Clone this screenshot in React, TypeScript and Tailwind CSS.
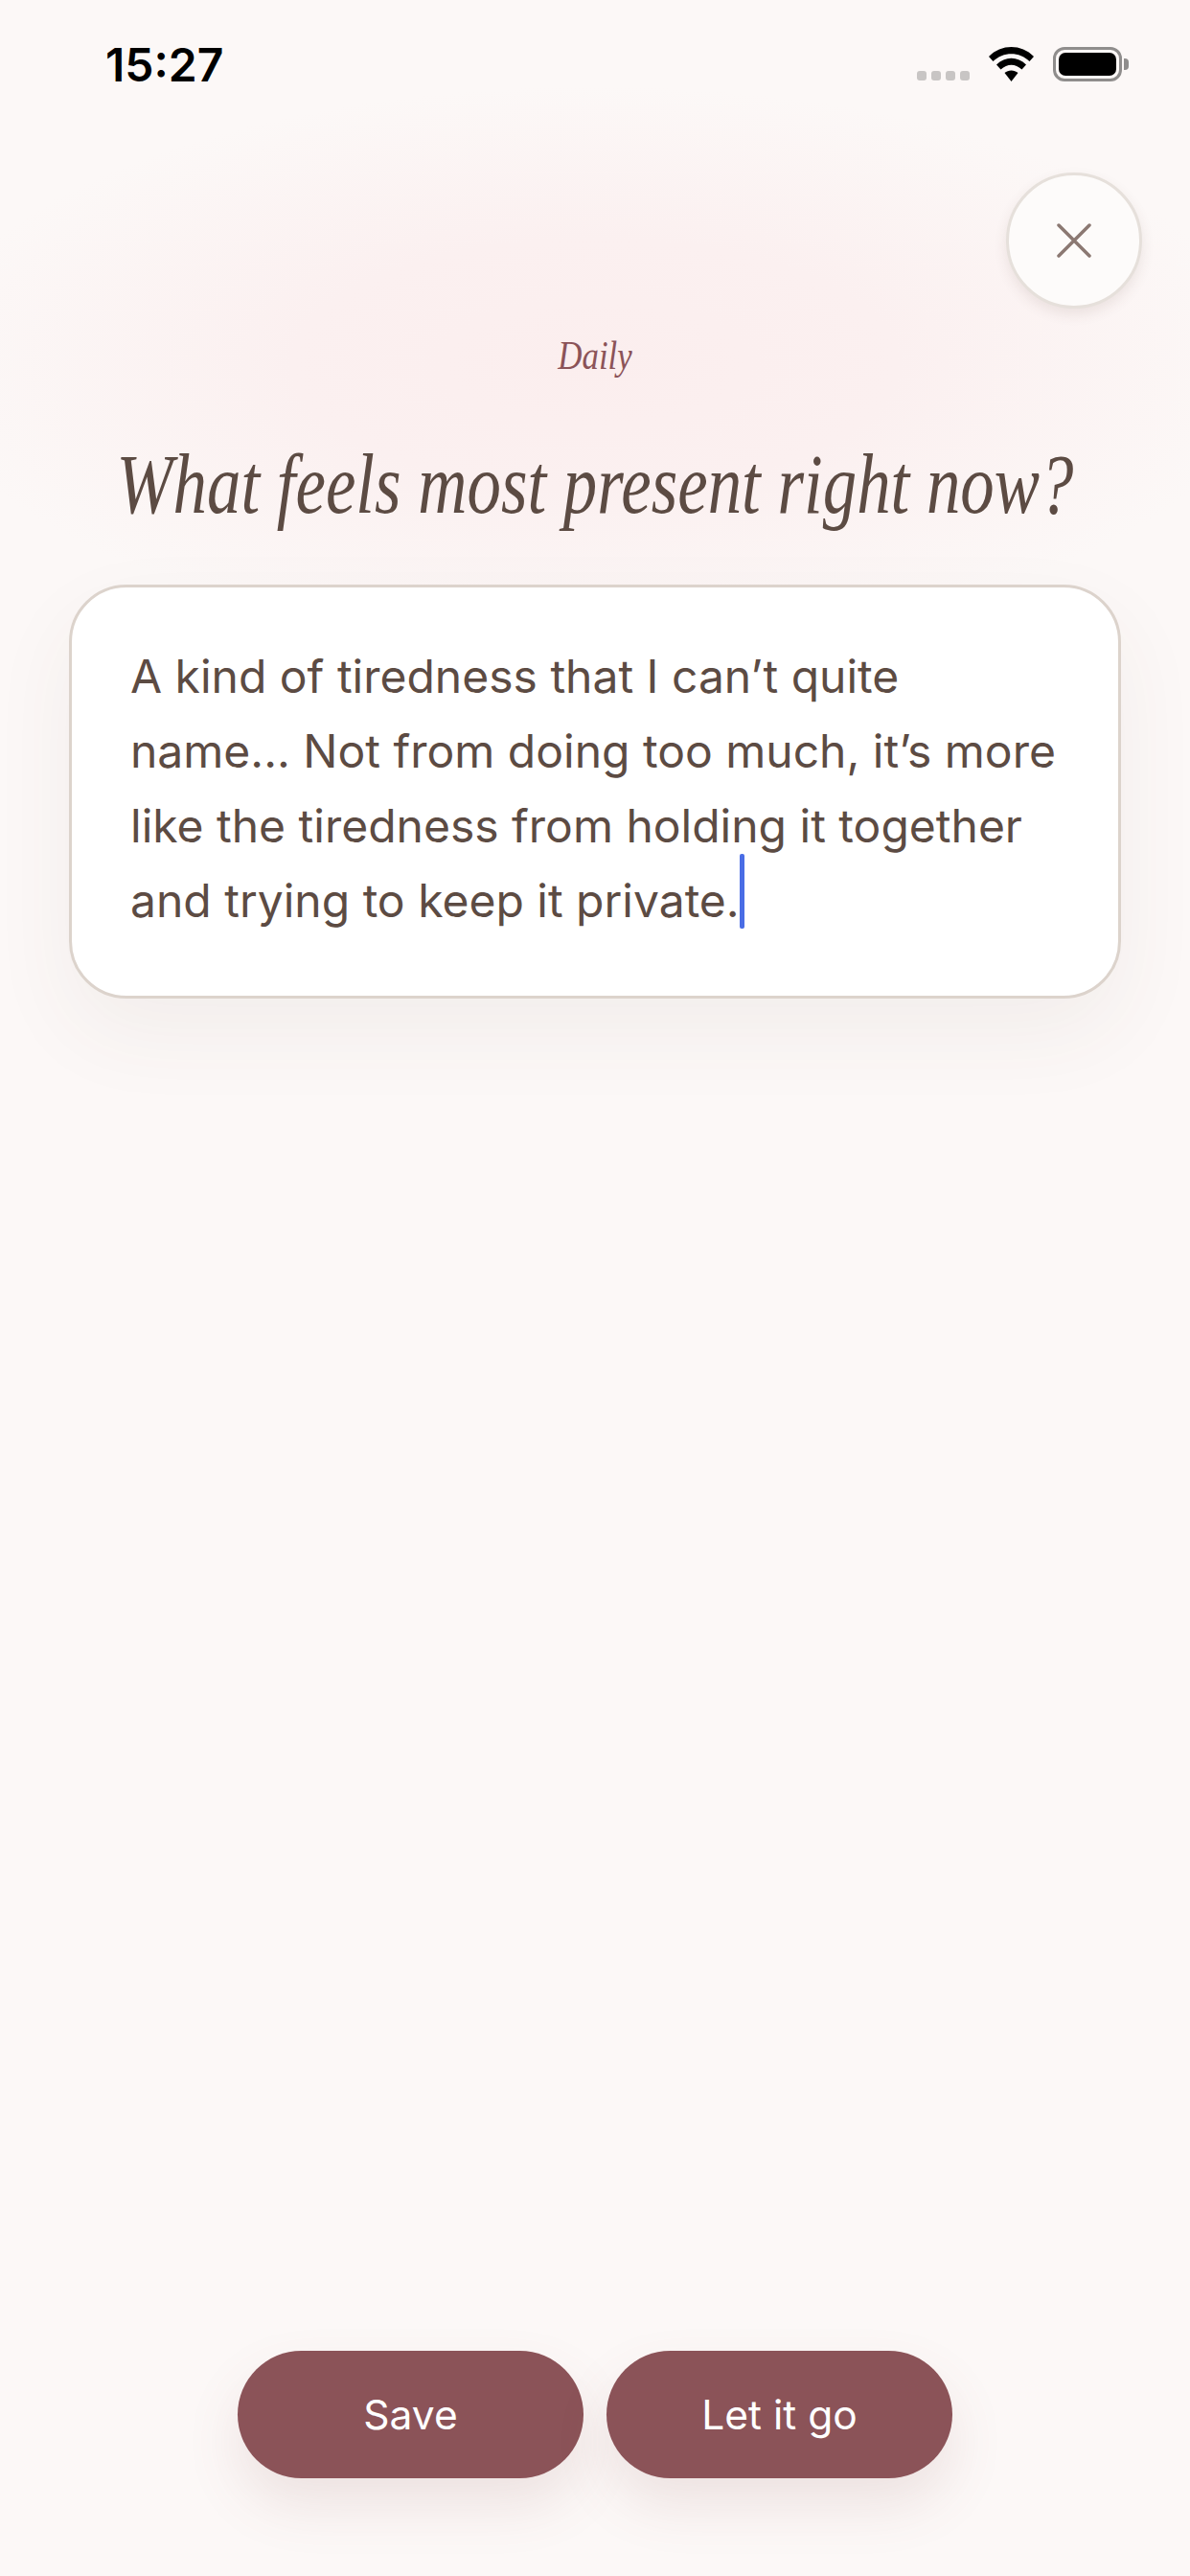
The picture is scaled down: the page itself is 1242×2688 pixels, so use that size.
function Wifi() {
  return (
    <svg width="47" height="36" viewBox="0 0 47 36" fill="#000">
      <path d="M0 10C13-3.3 34-3.3 47 10L42.5 15C32 4.5 15 4.5 4.5 15Z" />
      <path d="M8 18.5C17 9.5 30 9.5 39 18.5L34.5 23.5C27.5 17 19.5 17 12.5 23.5Z" />
      <path d="M16.5 27C20.5 23.5 26.5 23.5 30.5 27L23.5 36Z" />
    </svg>
  );
}

function StatusBar() {
  return (
    <div className="flex items-start justify-between pl-[110px] pr-[64px] pt-[40px] h-[180px]">
      <span className="font-['Inter'] text-[48px] leading-[56px] font-semibold text-black">
        15:27
      </span>
      <div className="flex items-end gap-[20px] mt-[9px]">
        <div className="flex gap-[5px] mb-[1px]">
          <div className="w-[10px] h-[10px] rounded-[3px] bg-[#c8c5c4]" />
          <div className="w-[10px] h-[10px] rounded-[3px] bg-[#c8c5c4]" />
          <div className="w-[10px] h-[10px] rounded-[3px] bg-[#c8c5c4]" />
          <div className="w-[10px] h-[10px] rounded-[3px] bg-[#c8c5c4]" />
        </div>
        <Wifi />
        <div className="flex items-center gap-[2px]">
          <div className="w-[72px] h-[36px] rounded-[12px] border-[3px] border-[#8f8d8c] p-[3px]">
            <div className="w-full h-full rounded-[7px] bg-black" />
          </div>
          <div className="w-[5px] h-[12px] rounded-r-[4px] bg-[#8f8d8c]" />
        </div>
      </div>
    </div>
  );
}

function App() {
  return (
    <div className="relative h-[2688px] w-[1242px] overflow-hidden bg-[#fcf8f7] flex flex-col">
      <div className="absolute left-[-80px] top-[90px] w-[1402px] h-[580px] bg-[radial-gradient(closest-side,#fbeeee_0%,#fbf0f0_45%,#fcf8f7_100%)]" />
      <div className="relative flex flex-col flex-1">
        <StatusBar />
        <div className="flex justify-end pr-[50px]">
          <button className="w-[142px] h-[142px] rounded-full bg-[#fdfbfa] border-[3px] border-[#e6e0db] shadow-[0_6px_14px_rgba(90,60,50,0.1)] flex items-center justify-center">
            <svg width="36" height="36" viewBox="0 0 36 36" fill="none" stroke="#8b7872" strokeWidth="3.5" strokeLinecap="round">
              <path d="M2 2L34 34M34 2L2 34" />
            </svg>
          </button>
        </div>
        <div className="mt-[27px] text-center font-['Liberation_Serif'] italic text-[42px] leading-[44px] text-[#8b5358] scale-x-[0.83]">
          Daily
        </div>
        <h1 className="mt-[61px] text-center font-['Liberation_Serif'] italic font-normal text-[88px] leading-[104px] text-[#5c4b43] whitespace-nowrap scale-x-[0.805]">
          What feels most present right now?
        </h1>
        <div className="mt-[52px] mx-[72px] h-[432px] rounded-[60px] bg-white border-[3px] border-[#dcd3cc] pl-[61px] pr-[40px] pt-[54px] shadow-[0_36px_90px_rgba(90,60,50,0.06)]">
          <p className="font-['Inter'] text-[48px] leading-[78px] text-[#5c4b43] whitespace-nowrap">
            A kind of tiredness that I can’t quite
            <br />
            name... Not from doing too much, it’s more
            <br />
            like the tiredness from holding it together
            <br />
            and trying to keep it private.
            <span className="relative">
              <span className="absolute left-0 top-[-19px] w-[5px] h-[78px] rounded-[2px] bg-[#4a6de5]" />
            </span>
          </p>
        </div>
        <div className="mt-auto mb-[102px] flex justify-center gap-[24px]">
          <button className="w-[361px] h-[133px] rounded-full bg-[#8b5358] text-white font-['Inter'] text-[42.5px] shadow-[0_28px_56px_rgba(139,83,88,0.13)]">
            Save
          </button>
          <button className="w-[361px] h-[133px] rounded-full bg-[#8b5358] text-white font-['Inter'] text-[42.5px] shadow-[0_28px_56px_rgba(139,83,88,0.13)]">
            Let it go
          </button>
        </div>
      </div>
    </div>
  );
}

export default App;
